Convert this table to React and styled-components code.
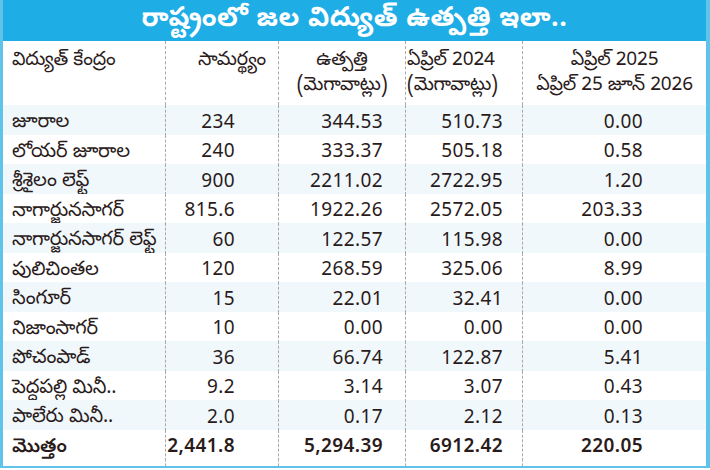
import React from "react";
import styled, { createGlobalStyle } from "styled-components";

const GlobalStyle = createGlobalStyle`
  html, body {
    margin: 0;
    padding: 0;
    background: #fff;
  }
`;

const Frame = styled.div`
  width: 710px;
  height: 470px;
  box-sizing: border-box;
  padding-bottom: 2px;
  font-family: "Noto Sans Telugu", "Noto Sans", "DejaVu Sans", sans-serif;
  color: #2a1b1b;
`;

const Panel = styled.div`
  height: 100%;
  box-sizing: border-box;
  border-left: 3px solid #5fc3ea;
  border-right: 4px solid #5fc3ea;
  border-bottom: 2px solid #5fc3ea;
  display: flex;
  flex-direction: column;
`;

const TitleBar = styled.div`
  height: 41px;
  background: #1fade6;
  color: #fff;
  display: flex;
  align-items: center;
  justify-content: center;
  font-size: 27px;
  font-weight: 700;
  letter-spacing: 0.5px;
`;

const Row = styled.div`
  display: grid;
  grid-template-columns: 162px 113px 127px 117px 1fr;
  height: ${(p) => p.$h || 29.5}px;
  background: ${(p) => (p.$shaded ? "#f1f8fc" : "#fff")};
  font-weight: ${(p) => (p.$bold ? 600 : 400)};
`;

const Body = styled.div`
  flex: 1;
  display: flex;
  flex-direction: column;
`;

const Filler = styled.div`
  flex: 1;
  display: grid;
  grid-template-columns: 162px 113px 127px 117px 1fr;
`;

const Cell = styled.div`
  box-sizing: border-box;
  display: flex;
  align-items: center;
  justify-content: ${(p) => p.$justify || "flex-end"};
  padding-right: ${(p) => p.$pr || 0}px;
  padding-left: ${(p) => p.$pl || 0}px;
  border-left: ${(p) => (p.$first ? "none" : "1px dashed #a9a9a9")};
  font-size: 18px;
  white-space: nowrap;
`;

const NameCell = styled(Cell)`
  justify-content: flex-start;
  padding-left: 9px;
  padding-top: 5px;
  border-left: none;
  font-size: 19.5px;
  letter-spacing: -0.2px;
`;

const HeadCell = styled(Cell)`
  flex-direction: column;
  align-items: ${(p) => p.$align || "center"};
  justify-content: flex-start;
  padding-top: 8px;
  font-size: 19px;
  line-height: 25px;
  letter-spacing: -0.2px;
`;

const Num = styled.span`
  font-family: "Noto Sans", "Open Sans", sans-serif;
  font-size: 19px;
  letter-spacing: 0.4px;
`;

const pads = [43, 22, 19, 63];

const rows = [
  ["జూరాల", "234", "344.53", "510.73", "0.00"],
  ["లోయర్ జూరాల", "240", "333.37", "505.18", "0.58"],
  ["శ్రీశైలం లెఫ్ట్", "900", "2211.02", "2722.95", "1.20"],
  ["నాగార్జునసాగర్", "815.6", "1922.26", "2572.05", "203.33"],
  ["నాగార్జునసాగర్ లెఫ్ట్", "60", "122.57", "115.98", "0.00"],
  ["పులిచింతల", "120", "268.59", "325.06", "8.99"],
  ["సింగూర్", "15", "22.01", "32.41", "0.00"],
  ["నిజాంసాగర్", "10", "0.00", "0.00", "0.00"],
  ["పోచంపాడ్", "36", "66.74", "122.87", "5.41"],
  ["పెద్దపల్లి మినీ..", "9.2", "3.14", "3.07", "0.43"],
  ["పాలేరు మినీ..", "2.0", "0.17", "2.12", "0.13"],
];

const total = ["మొత్తం", "2,441.8", "5,294.39", "6912.42", "220.05"];

function DataRow({ data, shaded, bold }) {
  return (
    <Row $shaded={shaded} $bold={bold}>
      <NameCell $first>{data[0]}</NameCell>
      {data.slice(1).map((v, i) => (
        <Cell key={i} $pr={pads[i]}>
          <Num>{v}</Num>
        </Cell>
      ))}
    </Row>
  );
}

export default function App() {
  return (
    <>
      <GlobalStyle />
      <Frame>
        <Panel>
          <TitleBar>రాష్ట్రంలో జల విద్యుత్ ఉత్పత్తి ఇలా..</TitleBar>
          <Body>
            <Row $h={64}>
              <HeadCell $first $align="flex-start" $pl={9}>
                విద్యుత్ కేంద్రం
              </HeadCell>
              <HeadCell $align="flex-end" $pr={12}>
                సామర్థ్యం
              </HeadCell>
              <HeadCell>
                <span>ఉత్పత్తి</span>
                <span>(మెగావాట్లు)</span>
              </HeadCell>
              <HeadCell $align="flex-start" $pl={1}>
                <span>ఏప్రిల్ 2024</span>
                <span>(మెగావాట్లు)</span>
              </HeadCell>
              <HeadCell>
                <span>ఏప్రిల్ 2025</span>
                <span>ఏప్రిల్ 25 జూన్ 2026</span>
              </HeadCell>
            </Row>
            {rows.map((r, i) => (
              <DataRow key={i} data={r} shaded={i % 2 === 0} />
            ))}
            <DataRow data={total} bold />
            <Filler>
              <Cell $first />
              <Cell />
              <Cell />
              <Cell />
              <Cell />
            </Filler>
          </Body>
        </Panel>
      </Frame>
    </>
  );
}
